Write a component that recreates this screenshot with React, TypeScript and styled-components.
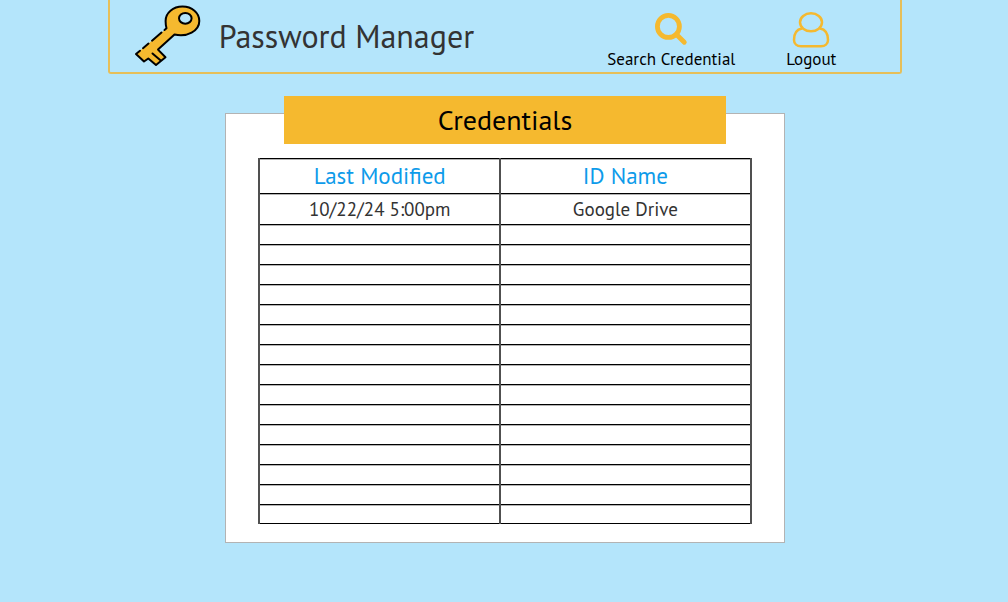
import React from "react";
import styled, { createGlobalStyle } from "styled-components";

const GlobalStyle = createGlobalStyle`
  *, *::before, *::after { box-sizing: border-box; }
  body {
    margin: 0;
    background: #b4e5fb;
    color: #333;
    font-family: "PT Sans", "Noto Sans", sans-serif;
  }
`;

const Page = styled.div`
  display: flex;
  flex-direction: column;
  align-items: center;
  padding-left: 2px;
`;

const Header = styled.header`
  display: flex;
  align-items: center;
  width: 79%;
  min-width: 680px;
  height: 74px;
  padding: 0 64px 0 24px;
  border: 2px solid #e6bf59;
  border-top: 0;
  border-radius: 0 0 3px 3px;
`;

const KeyIcon = styled.svg`
  flex: none;
  width: 70px;
  height: 68px;
  stroke: #000;
  stroke-width: 2;
  stroke-linecap: round;
  stroke-linejoin: round;
`;

const Title = styled.h1`
  flex: 1;
  margin: 0 0 0 15px;
  font-size: 32px;
  font-weight: 400;
  line-height: 40px;
  white-space: nowrap;
`;

const Nav = styled.nav`
  display: flex;
  gap: 51px;
`;

const NavButton = styled.button`
  display: flex;
  flex-direction: column;
  align-items: center;
  padding: 6px 0 0;
  border: 0;
  background: none;
  color: #000;
  font: 400 17px/20px "PT Sans", "Noto Sans", sans-serif;
  white-space: nowrap;
  cursor: pointer;
`;

const NavIcon = styled.svg`
  width: 40px;
  height: 40px;
  fill: none;
  stroke: #f5b92f;
`;

const Panel = styled.main`
  display: flex;
  flex-direction: column;
  align-items: center;
  width: 55.6%;
  min-width: 500px;
  max-width: 100%;
  margin-top: 39px;
  padding: 0 32px 18px;
  border: 1px solid #b3b3b3;
  background: #fff;
`;

const Banner = styled.h2`
  width: 89.5%;
  margin: -18px 0 14px;
  background: #f5b92f;
  color: #000;
  font-size: 28px;
  font-weight: 400;
  line-height: 48px;
  text-align: center;
`;

const Table = styled.table`
  width: 100%;
  border-collapse: collapse;
  table-layout: fixed;
`;

const HeadCell = styled.th<{ $width: string }>`
  width: ${(p) => p.$width};
  height: 35px;
  padding: 0;
  border: solid;
  border-width: 1px 2px;
  border-color: #000 #505050;
  box-shadow: inset 0 1px #b3b3b3;
  color: #0d9bea;
  font-size: 23px;
  font-weight: 400;
  line-height: 28px;
`;

const Cell = styled.td<{ $filled?: boolean }>`
  height: ${(p) => (p.$filled ? "31px" : "20px")};
  padding: 0;
  border: solid;
  border-width: 1px 2px;
  border-color: #000 #505050;
  box-shadow: inset 0 1px #b3b3b3;
  font-size: 19px;
  line-height: 24px;
  text-align: center;

  tr:last-child > & { height: 19px; }
`;

const credentials = [{ modified: "10/22/24 5:00pm", name: "Google Drive" }];
const blankRows = Array.from({ length: 15 }, (_, i) => i);

export default function App() {
  return (
    <>
      <GlobalStyle />
      <Page>
        <Header>
          <KeyIcon viewBox="4 2 70 68" aria-hidden="true">
            <path
              d="M36.5 28.5 L6 54 L14 61.5 L18.3 58.5 L26 65 L35.5 57.3 L28 49.6 L44.5 34.5 C57 37.5 69.3 31 69.3 21 C69.3 13 62 6.6 52.5 6.6 C43 6.6 35.6 13 35.6 21 Q35.6 25 36.5 28.5 Z"
              fill="#f5b92f"
              stroke="none"
            />
            <path
              d="M10 50.7 L6 54 L14 61.5 L18.3 58.5 L26 65 L35.5 57.3 L28 49.6 L44.5 34.5 C57 37.5 69.3 31 69.3 21 C69.3 13 62 6.6 52.5 6.6 C43 6.6 35.6 13 35.6 21 Q35.6 25 36.5 28.3 L34.5 30 M31.5 32.5 L22 40.7 M18.5 43.6 L13 48.2 M22.5 53.5 L31 60.7"
              fill="none"
            />
            <ellipse cx="55.3" cy="18.3" rx="6.3" ry="5.4" fill="#b4e5fb" />
          </KeyIcon>
          <Title>Password Manager</Title>
          <Nav>
            <NavButton type="button">
              <NavIcon viewBox="0 0 40 40" strokeWidth="4.8" strokeLinecap="round" aria-hidden="true">
                <circle cx="17.4" cy="17.4" r="11" />
                <path d="M25.5 25.5 L33.3 33.3" />
              </NavIcon>
              Search Credential
            </NavButton>
            <NavButton type="button">
              <NavIcon viewBox="0 0 40 40" strokeWidth="2.5" aria-hidden="true">
                <ellipse cx="20" cy="13.3" rx="11" ry="9" />
                <path d="M11 19.5 C5 20.5 3 26 3 31 C3 35 6 37.2 10 37.2 H30 C34 37.2 37 35 37 31 C37 26 35 20.5 29 19.5" />
              </NavIcon>
              Logout
            </NavButton>
          </Nav>
        </Header>
        <Panel>
          <Banner>Credentials</Banner>
          <Table>
            <thead>
              <tr>
                <HeadCell scope="col" $width="49%">Last Modified</HeadCell>
                <HeadCell scope="col" $width="51%">ID Name</HeadCell>
              </tr>
            </thead>
            <tbody>
              {credentials.map((c) => (
                <tr key={c.name}>
                  <Cell $filled>{c.modified}</Cell>
                  <Cell $filled>{c.name}</Cell>
                </tr>
              ))}
              {blankRows.map((i) => (
                <tr key={i}>
                  <Cell />
                  <Cell />
                </tr>
              ))}
            </tbody>
          </Table>
        </Panel>
      </Page>
    </>
  );
}
